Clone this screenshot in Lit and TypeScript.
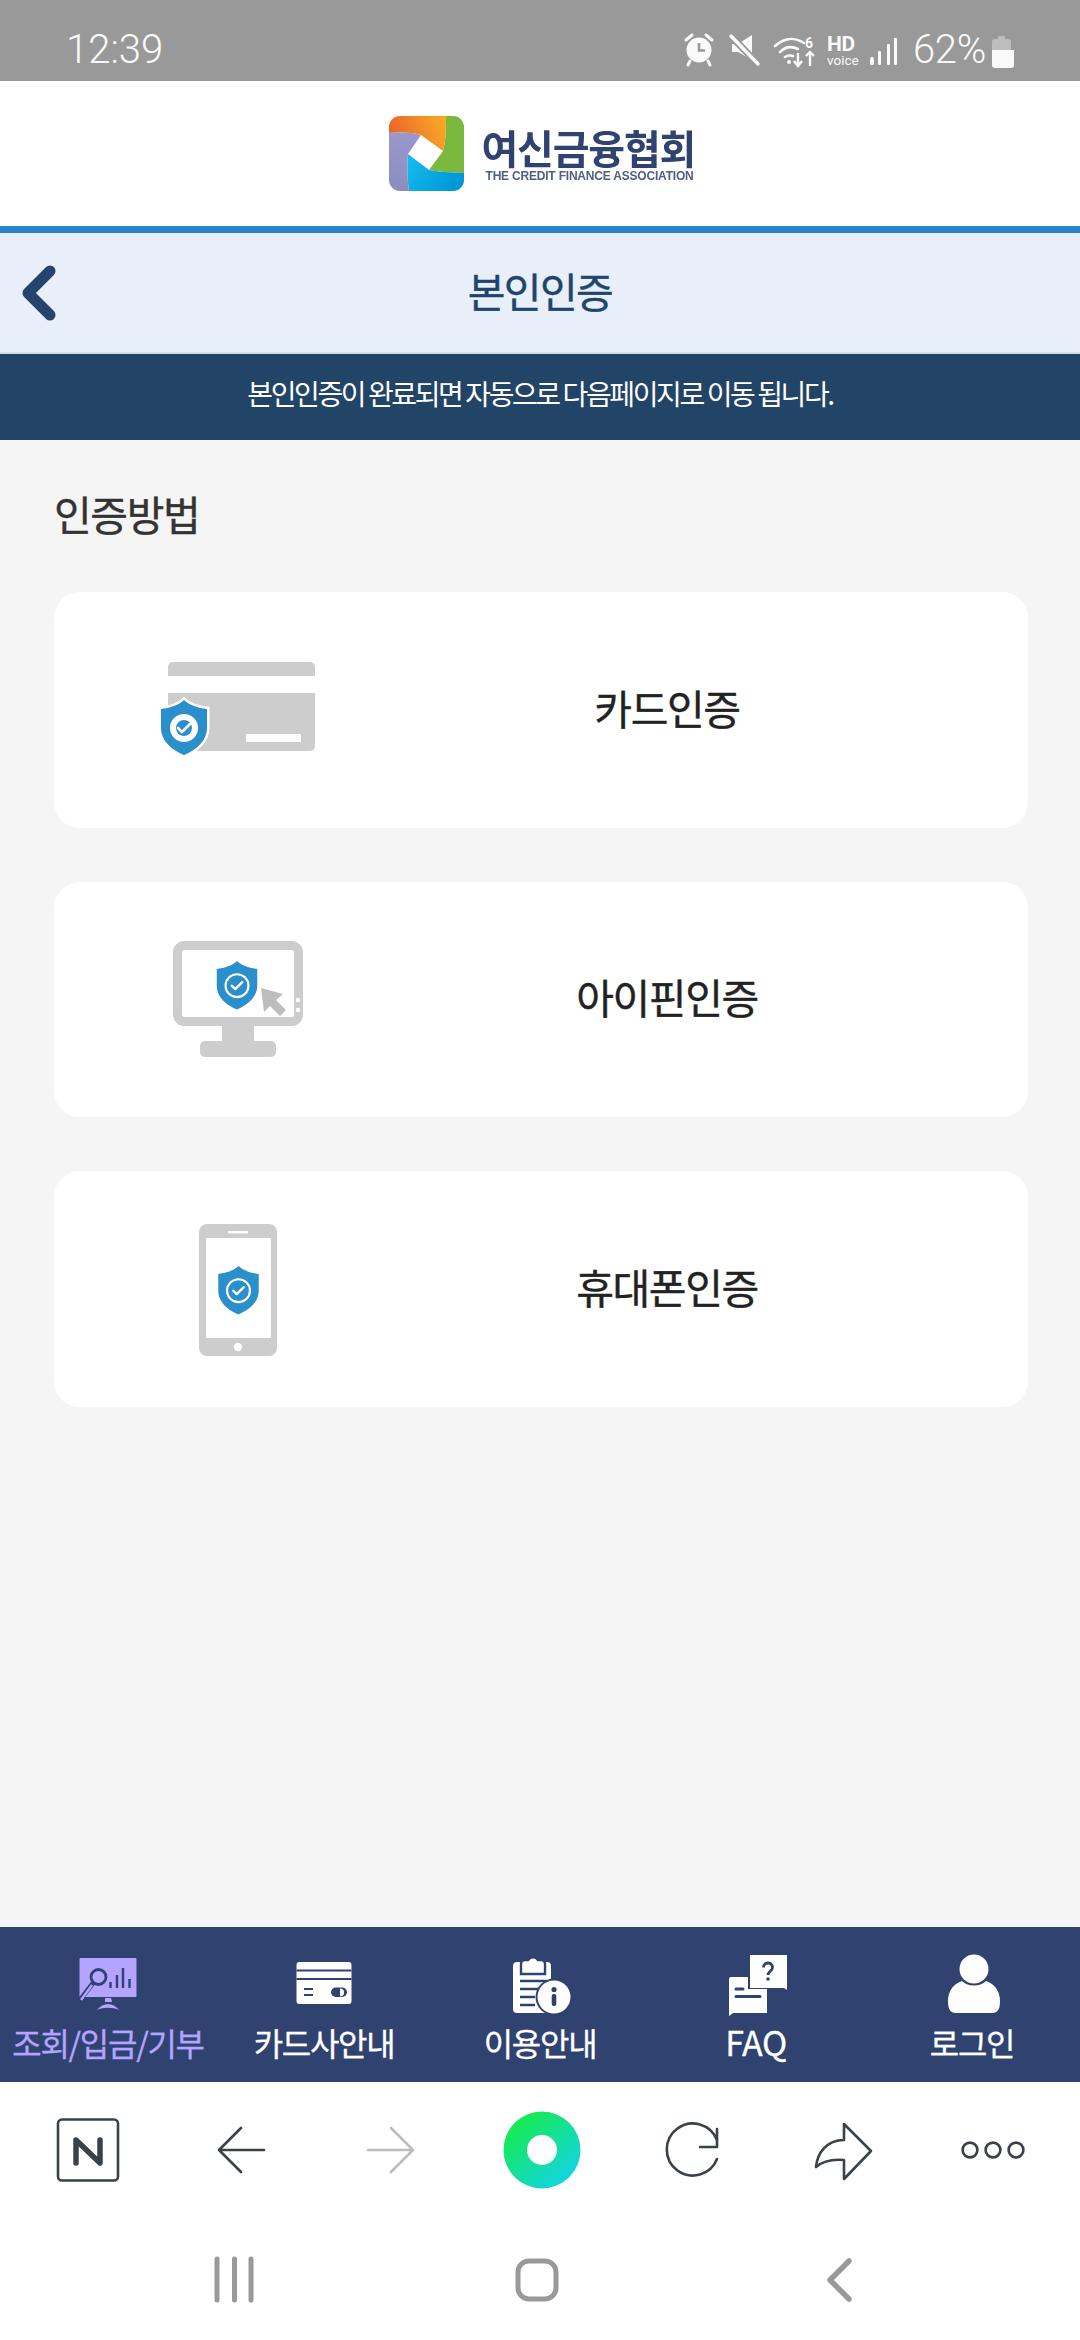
import { LitElement, html, css, svg } from "lit";
import { customElement } from "lit/decorators.js";

const BLUE = "#2b8fcb";
const GREY = "#cdcdcd";
const NAVY = "#2f4270";
const INK = "#3a4249";

const shield = (cx: number, top: number, s: number, thick: boolean) => svg`
  <g transform="translate(${cx} ${top}) scale(${s})">
    <path d="M0 0C5 5 14 8 23 9V28C23 42 10 51 0 55C-10 51-23 42-23 28V9C-14 8-5 5 0 0Z" fill="${BLUE}" stroke="${thick ? "#fff" : "none"}" stroke-width="${thick ? 5 : 0}" paint-order="stroke"/>
    <circle cx="0" cy="28" r="${thick ? 11 : 13}" fill="none" stroke="#fff" stroke-width="${thick ? 6 : 2.4}"/>
    <path d="M-6 28L-2 32L6 24" fill="none" stroke="#fff" stroke-width="2.6" stroke-linecap="round" stroke-linejoin="round"/>
  </g>`;

const cardIcons = [
  html`<svg width="160" height="140" viewBox="0 0 160 140">
    <path d="M10 36V27a5 5 0 0 1 5-5H152a5 5 0 0 1 5 5V36Z" fill="${GREY}"/>
    <path d="M10 53H157V106a5 5 0 0 1-5 5H15a5 5 0 0 1-5-5Z" fill="${GREY}"/>
    <rect x="88" y="94" width="55" height="8" fill="#fff"/>
    ${shield(26, 60, 1, true)}
  </svg>`,
  html`<svg width="160" height="140" viewBox="0 0 160 140">
    <rect x="19.500" y="16.500" width="121" height="76" rx="7" fill="#fff" stroke="${GREY}" stroke-width="9"/>
    <rect x="64" y="97" width="32" height="16" fill="${GREY}"/>
    <rect x="42" y="112" width="76" height="16" rx="5" fill="${GREY}"/>
    ${shield(79, 32, 0.88, false)}
    <path d="M103 59L125 65L118 71L128 81L122 87L112 77L106 83Z" fill="#bdbdbd"/>
    <circle cx="140" cy="71" r="2.2" fill="#fff"/><circle cx="140" cy="81" r="2.2" fill="#fff"/>
  </svg>`,
  html`<svg width="160" height="140" viewBox="0 0 160 140">
    <rect x="41" y="5" width="78" height="132" rx="8" fill="${GREY}"/>
    <rect x="48" y="19" width="65" height="100" fill="#fff"/>
    <rect x="70" y="12" width="20" height="2.5" rx="1" fill="#fff"/>
    <circle cx="80" cy="128" r="4.2" fill="#fff"/>
    ${shield(80.5, 47, 0.88, false)}
  </svg>`,
];

const navIcons = [
  html`<svg class="ni" viewBox="0 0 64 64">
    <rect x="3.500" y="6" width="57" height="39" rx="1" fill="#b4a4ff"/>
    <circle cx="22.500" cy="25" r="7.500" fill="none" stroke="${NAVY}" stroke-width="2.8"/>
    <path d="M17 31L4 48" stroke="${NAVY}" stroke-width="4.6"/>
    <path d="M16 33L5 48" stroke="#b4a4ff" stroke-width="2.4"/>
    <path d="M34.500 36V30M41 36V23M47 36V16M53.500 36V27" stroke="${NAVY}" stroke-width="2.4"/>
    <path d="M29 46H35L36 50H29Z" fill="#b4a4ff"/>
    <path d="M21 58C27 50 37 50 43 58C37 55 27 55 21 58Z" fill="#b4a4ff"/>
  </svg>`,
  html`<svg class="ni" viewBox="0 0 64 64">
    <rect x="4.500" y="10" width="55" height="42" rx="3" fill="#fff"/>
    <path d="M4.500 18.500H59.500M4.500 27H59.500" stroke="${NAVY}" stroke-width="2"/>
    <path d="M12 37H21M12 43H21" stroke="${NAVY}" stroke-width="1.8"/>
    <rect x="39" y="35.500" width="16" height="9.500" rx="4.750" fill="${NAVY}"/>
    <path d="M48 36.500a4 4 0 0 1 0 8Z" fill="#fff"/>
  </svg>`,
  html`<svg class="ni" viewBox="-1 0 64 64">
    <rect x="4" y="10" width="38" height="51" rx="4" fill="#fff"/>
    <path d="M12 22V12a4 4 0 0 1 4-4h3a6 6 0 0 1 10 0h3a4 4 0 0 1 4 4V22Z" fill="#fff" stroke="${NAVY}" stroke-width="2.4"/>
    <path d="M11 29H38M11 37H30M11 45H26M11 53H26" stroke="${NAVY}" stroke-width="2.4"/>
    <circle cx="45" cy="45" r="18.500" fill="${NAVY}"/>
    <circle cx="45" cy="45" r="16.500" fill="#fff"/>
    <circle cx="45" cy="37.500" r="2.6" fill="${NAVY}"/>
    <rect x="42.700" y="42" width="4.6" height="12" rx="2" fill="${NAVY}"/>
  </svg>`,
  html`<svg class="ni" viewBox="-2 0 64 64">
    <path d="M3 27a2 2 0 0 1 2-2H41V61H7L3 64Z" fill="#fff"/>
    <path d="M24 3H61V38L58 35H24Z" fill="${NAVY}" stroke="${NAVY}" stroke-width="4"/>
    <path d="M24 3H61V38L58 36H24Z" fill="#fff"/>
    <path d="M10 37H17M10 44.500H34" stroke="${NAVY}" stroke-width="3" stroke-linecap="round"/>
    <path d="M37.500 15.500c0-6 9-6 9 0c0 3.500-4.500 4-4.500 7.500" fill="none" stroke="${NAVY}" stroke-width="2.8"/>
    <circle cx="42" cy="27" r="1.8" fill="${NAVY}"/>
  </svg>`,
  html`<svg class="ni" viewBox="-2 0 64 64">
    <path d="M6 49C6 38 12 32 20 29C26 35 38 35 44 29C52 32 58 38 58 49C58 57 56 61 50 61H14C8 61 6 57 6 49Z" fill="#fff"/>
    <circle cx="32" cy="17" r="14.500" fill="#fff"/>
  </svg>`,
];

const stroke = (d: string, color = INK, w = 2.6) => svg`<path d="${d}" fill="none" stroke="${color}" stroke-width="${w}" stroke-linecap="round" stroke-linejoin="round"/>`;

const toolIcons = [
  html`<svg class="ti" viewBox="2 0 80 80">
    <rect x="10" y="9.500" width="60" height="61" rx="4" fill="none" stroke="${INK}" stroke-width="2.6"/>
    ${stroke("M28 53V30L52 53V30", INK, 5.5)}
  </svg>`,
  html`<svg class="ti" viewBox="0 0 80 80">${stroke("M63 40H18M40 18L18 40L40 62")}</svg>`,
  html`<svg class="ti" viewBox="0 0 80 80">${stroke("M17 40H62M40 18L62 40L40 62", "#bcbcbc")}</svg>`,
  html`<svg class="ti" viewBox="0 0 80 80">
    <defs><linearGradient id="g" x1="0.15" y1="0.1" x2="0.85" y2="0.9"><stop offset="0" stop-color="#16ec4a"/><stop offset="1" stop-color="#14d3e6"/></linearGradient></defs>
    <circle cx="40" cy="40" r="38.500" fill="url(#g)"/><circle cx="40" cy="40" r="15" fill="#fff"/>
  </svg>`,
  html`<svg class="ti" viewBox="0 0 80 80">${stroke("M65 30A26 26 0 1 0 65 49")}${stroke("M65 19V37H48")}</svg>`,
  html`<svg class="ti" viewBox="0 0 80 80">${stroke("M13 57C14 44 23 30 41 30V14L68 41L41 69V50C30 49 21 50 13 57Z")}</svg>`,
  html`<svg class="ti" viewBox="0 0 80 80">
    <g fill="none" stroke="${INK}" stroke-width="2.6"><circle cx="17" cy="40" r="7.400"/><circle cx="40" cy="40" r="7.400"/><circle cx="63" cy="40" r="7.400"/></g>
  </svg>`,
];

@customElement("app-root")
export class AppRoot extends LitElement {
  static styles = css`
    :host { display: block; width: 1080px; height: 2340px; font-family: "Noto Sans CJK KR", "Noto Sans", sans-serif; }
    .page { display: flex; flex-direction: column; height: 2340px; background: #f5f5f5; }
    .status { height: 81px; flex: none; background: #999; color: #fafafa; display: flex; align-items: center; padding: 18px 66px 0 66px; box-sizing: border-box; font-family: Roboto, sans-serif; font-weight: 300; }
    .time { font-size: 40px; line-height: 1; flex: 1; }
    .st-icons { display: block; }
    .pct { font-size: 40px; line-height: 44px; letter-spacing: -0.3px; margin: 0 6px 0 14px; }
    .brand { height: 145px; flex: none; background: #fff; border-bottom: 7px solid #2786c8; display: flex; align-items: center; justify-content: center; gap: 18px; padding-left: 4px; box-sizing: content-box; width: 1076px; }
    .mark { filter: blur(0.5px); }
    .bt { display: flex; flex-direction: column; filter: blur(0.6px); color: #2f4270; width: 214px; }
    .bt b { font-size: 40px; line-height: 44px; letter-spacing: -1.2px; font-weight: 700; white-space: nowrap; }
    .bt i { font: 700 12px/14px "Liberation Sans", sans-serif; white-space: nowrap; letter-spacing: -0.2px; margin-left: 4px; opacity: .85; }
    .title { height: 121px; flex: none; background: #e9eff9; border-bottom: 2px solid #d3e0e3; box-sizing: border-box; position: relative; display: flex; align-items: center; justify-content: center; padding-bottom: 5px; font-size: 41px; color: #20456c; letter-spacing: -1.6px; font-weight: 400; -webkit-text-stroke: 0.4px #20456c; }
    .title svg { position: absolute; left: 18px; top: 32px; }
    .notice { height: 86px; flex: none; background: #214467; color: #fff; display: flex; align-items: center; justify-content: center; padding-bottom: 8px; box-sizing: border-box; font-size: 28px; letter-spacing: -2.4px; white-space: nowrap; }
    .content { flex: 1; padding: 47px 52px 0 54px; display: flex; flex-direction: column; }
    h2 { margin: 0 0 52px; font-size: 41px; line-height: 53px; font-weight: 400; color: #333; letter-spacing: -1.4px; -webkit-text-stroke: 0.4px #333; }
    .cards { display: flex; flex-direction: column; gap: 54px; }
    .card { height: 235.5px; background: #fff; border-radius: 26px; display: grid; grid-template-columns: 368px 490px; align-items: center; font-size: 41px; font-weight: 400; color: #222; letter-spacing: -1.4px; -webkit-text-stroke: 0.4px #222; }
    .card .ic { display: flex; justify-content: center; }
    .card .lb { text-align: center; padding-bottom: 6px; }
    .nav { height: 155px; flex: none; background: #2f4270; display: grid; grid-template-columns: repeat(5, 216px); color: #fff; }
    .ni-wrap { display: flex; flex-direction: column; align-items: center; padding-top: 25px; box-sizing: border-box; }
    .ni { width: 64px; height: 64px; display: block; }
    .nl { font-size: 32px; line-height: 44px; margin-top: 4px; letter-spacing: -1.3px; white-space: nowrap; -webkit-text-stroke: 0.3px currentColor; }
    .latin { font-size: 34px; letter-spacing: -0.4px; }
    .on { color: #b4a4ff; }
    .tools { height: 138px; flex: none; background: #fff; display: grid; grid-template-columns: repeat(7, 150.5px); padding-left: 15px; align-items: center; }
    .tools > div { display: flex; justify-content: center; margin-top: -3px; }
    .ti { width: 80px; height: 80px; display: block; }
    .sys { height: 120px; flex: none; background: #fff; display: grid; grid-template-columns: repeat(3, 303px); padding-left: 82px; align-items: center; }
    .sys > div { display: flex; justify-content: center; }
    .sys svg { display: block; }
  `;

  render() {
    const cards = ["카드인증", "아이핀인증", "휴대폰인증"];
    const nav = ["조회/입금/기부", "카드사안내", "이용안내", "FAQ", "로그인"];
    return html`<div class="page">
      <div class="status">
        <span class="time">12:39</span>
        <svg class="st-icons" width="216" height="44" viewBox="0 0 216 44" font-family="Roboto, sans-serif" fill="#fafafa">
          <circle cx="16" cy="22" r="12.500"/>
          <path d="M16 15V22.500H22" stroke="#999" stroke-width="2.6" fill="none"/>
          <path d="M3 12L9 7M29 12L23 7M7 33L5 37M25 33L27 37" stroke="#fafafa" stroke-width="3" stroke-linecap="round"/>
          <path d="M49 16H55L69 7V32L55 24H49Z"/>
          <path d="M47 7L76 37" stroke="#999" stroke-width="7"/>
          <path d="M48 8L75 36" stroke="#fafafa" stroke-width="3.4" stroke-linecap="round"/>
          <path d="M92 18C102 9 111 9 121 15M97 24C103 18 109 18 115 21M102 29C105 27 107 27 110 28" fill="none" stroke="#fafafa" stroke-width="2.6" stroke-linecap="round"/>
          <circle cx="106" cy="34" r="2"/>
          <text x="122" y="20" font-size="14" font-weight="700">6</text>
          <path d="M115 25V38M111 33L115 38L119 33M127 38V24M123 28L127 24L131 28" fill="none" stroke="#fafafa" stroke-width="2.4"/>
          <text x="144" y="23" font-size="21" font-weight="700" letter-spacing="-0.3">HD</text>
          <text x="144" y="37" font-size="13.500" font-weight="400">voice</text>
          <g fill="#fafafa"><rect x="187" y="29" width="4" height="8" rx="1.5"/><rect x="195" y="23" width="3" height="14" rx="1"/><rect x="204" y="16" width="3" height="21" rx="1"/><rect x="211" y="10" width="3" height="27" rx="1"/></g>
        </svg>
        <span class="pct">62%</span>
        <svg width="22" height="44" viewBox="308 0 22 44" fill="#fafafa">
          <path d="M308 14a3 3 0 0 1 3-3h3V8h7v3h3a3 3 0 0 1 3 3V22H308Z" fill="#bdbdbd"/>
          <path d="M308 22H330V37a3 3 0 0 1-3 3H311a3 3 0 0 1-3-3Z"/>
        </svg>
      </div>
      <div class="brand">
        <svg class="mark" width="75" height="75" viewBox="0 0 75 75">
          <defs>
            <clipPath id="r"><rect width="75" height="75" rx="11"/></clipPath>
            <linearGradient id="o" x1="0" y1="0.5" x2="1" y2="0.3"><stop offset="0" stop-color="#e9642a"/><stop offset="1" stop-color="#f9a826"/></linearGradient>
            <linearGradient id="c" x1="0" y1="0" x2="1" y2="0.4"><stop offset="0" stop-color="#17bdee"/><stop offset="1" stop-color="#0098d8"/></linearGradient>
            <linearGradient id="p" x1="0" y1="0" x2="0" y2="1"><stop offset="0" stop-color="#9a98cc"/><stop offset="1" stop-color="#8a8dc0"/></linearGradient>
          </defs>
          <g clip-path="url(#r)">
            <path d="M0 0H57C57 12 57 24 54 35L32 19C24 16 10 16 0 17Z" fill="url(#o)"/>
            <path d="M57 0H75V57C62 56 50 56 40 54L54 35C57 24 57 12 57 0Z" fill="#7ab93d"/>
            <path d="M19 38L40 54C50 56 62 56 75 57V75H20C18 60 18 50 19 38Z" fill="url(#c)"/>
            <path d="M0 17C10 16 24 16 32 19L19 38C18 50 18 60 20 75H0Z" fill="url(#p)"/>
          </g>
        </svg>
        <div class="bt"><b>여신금융협회</b><i>THE CREDIT FINANCE ASSOCIATION</i></div>
      </div>
      <div class="title">
        <svg width="44" height="56" viewBox="0 0 44 56"><path d="M32 6L10 28L32 50" fill="none" stroke="#26426f" stroke-width="11" stroke-linecap="round" stroke-linejoin="round"/></svg>
        본인인증
      </div>
      <div class="notice">본인인증이 완료되면 자동으로 다음페이지로 이동 됩니다.</div>
      <div class="content">
        <h2>인증방법</h2>
        <div class="cards">
          ${cards.map((c, i) => html`<div class="card"><div class="ic">${cardIcons[i]}</div><div class="lb">${c}</div></div>`)}
        </div>
      </div>
      <div class="nav">
        ${nav.map((n, i) => html`<div class="ni-wrap ${i === 0 ? "on" : ""}">${navIcons[i]}<span class="nl ${n === "FAQ" ? "latin" : ""}">${n}</span></div>`)}
      </div>
      <div class="tools">${toolIcons.map((t) => html`<div>${t}</div>`)}</div>
      <div class="sys">
        <div><svg width="44" height="50" viewBox="0 0 44 50"><path d="M5 4V45M22.500 4V45M39 4V45" stroke="#999" stroke-width="5" stroke-linecap="round"/></svg></div>
        <div><svg width="50" height="50" viewBox="0 0 50 50"><rect x="6" y="6" width="38" height="38" rx="11" fill="none" stroke="#999" stroke-width="5"/></svg></div>
        <div><svg width="30" height="50" viewBox="0 0 30 50"><path d="M24 6L5 25L24 44" fill="none" stroke="#999" stroke-width="5.5" stroke-linecap="round" stroke-linejoin="round"/></svg></div>
      </div>
    </div>`;
  }
}
